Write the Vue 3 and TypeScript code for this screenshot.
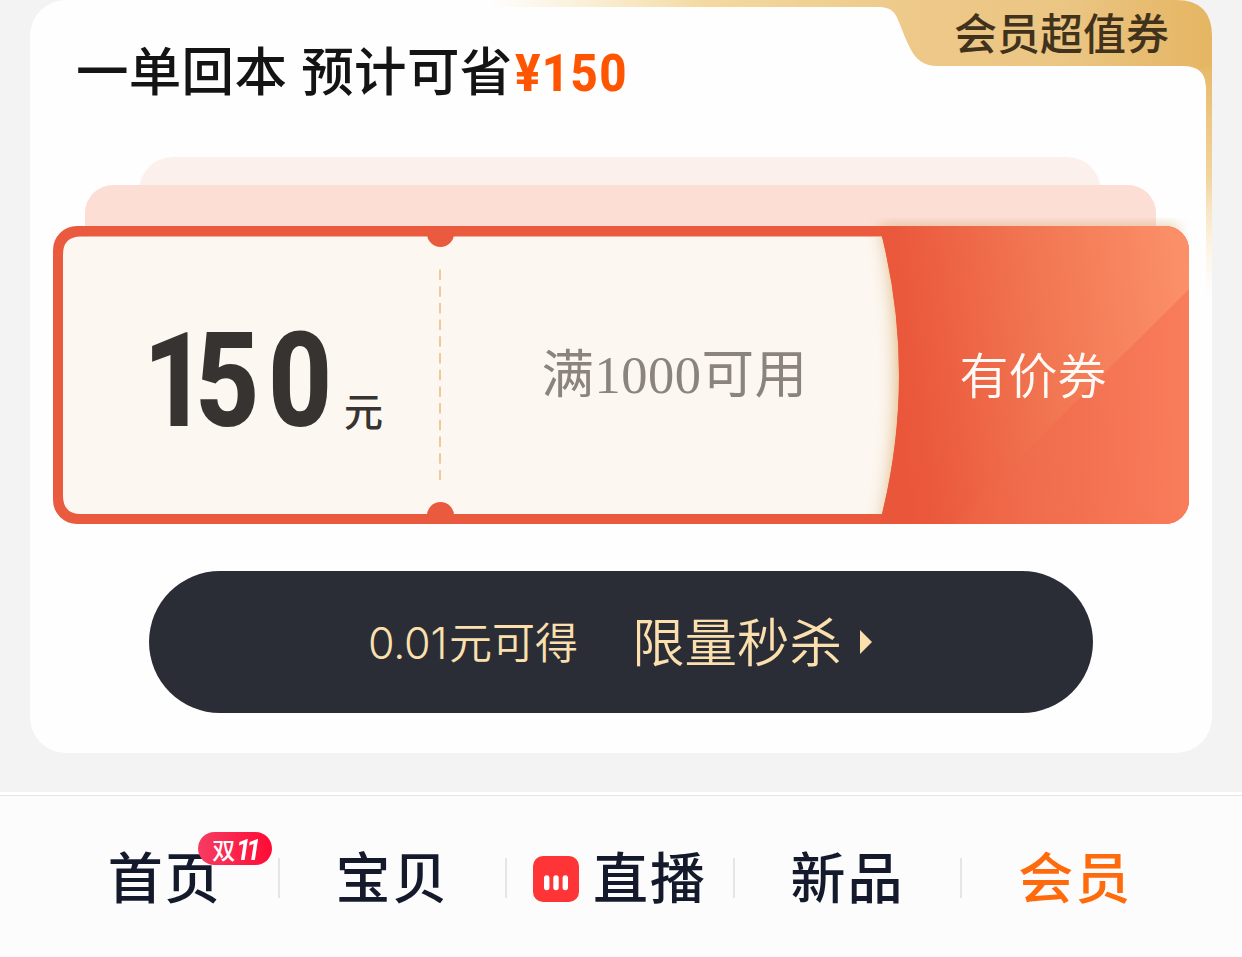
<template>
  <div class="page">
    <section class="card">
      <svg class="card-gold" viewBox="0 0 1182 300" aria-hidden="true">
        <defs>
          <linearGradient id="goldTop" x1="460" y1="0" x2="1182" y2="0" gradientUnits="userSpaceOnUse">
            <stop offset="0" stop-color="#f6dfa8" stop-opacity="0" />
            <stop offset="0.3" stop-color="#f3d9a0" />
            <stop offset="0.6" stop-color="#edc888" />
            <stop offset="0.8" stop-color="#eac583" />
            <stop offset="1" stop-color="#e5b562" />
          </linearGradient>
          <linearGradient id="goldSide" x1="0" y1="60" x2="0" y2="300" gradientUnits="userSpaceOnUse">
            <stop offset="0" stop-color="#e6b866" />
            <stop offset="0.5" stop-color="#f3d5a0" />
            <stop offset="1" stop-color="#fdf3dc" stop-opacity="0" />
          </linearGradient>
        </defs>
        <path
          d="M460 0H1146Q1182 0 1182 36V92H1176V88Q1176 66 1153 66H908C894 66 886 60 880 48C873 34 869 20 865 14C861 9 857 7 848 7H460Z"
          fill="url(#goldTop)"
        />
        <path d="M1176 86Q1176 74 1168 69L1182 66V300H1176Z" fill="url(#goldSide)" />
      </svg>

      <header class="card-header">
        <h1 class="headline">一单回本 预计可省<span class="saving">¥150</span></h1>
        <span class="ribbon">会员超值券</span>
      </header>

      <div class="stack">
        <div class="layer-far"></div>
        <div class="layer-near"></div>
        <div class="coupon">
          <svg class="coupon-art" viewBox="0 0 1136 298" aria-hidden="true">
            <defs>
              <linearGradient id="panel" x1="835" y1="125" x2="1136" y2="85" gradientUnits="userSpaceOnUse">
                <stop offset="0" stop-color="#ea563a" />
                <stop offset="0.1" stop-color="#eb5a3d" />
                <stop offset="0.5" stop-color="#f17551" />
                <stop offset="1" stop-color="#fb9068" />
              </linearGradient>
              <linearGradient id="fold" x1="900" y1="0" x2="1136" y2="0" gradientUnits="userSpaceOnUse">
                <stop offset="0" stop-color="#ee6647" stop-opacity="0.2" />
                <stop offset="0.5" stop-color="#f26c4e" stop-opacity="0.7" />
                <stop offset="1" stop-color="#f97c5b" />
              </linearGradient>
              <clipPath id="outer"><rect width="1136" height="298" rx="24" /></clipPath>
              <clipPath id="paper">
                <path d="M28 10.500H829Q863 149 829 288H28Q10 288 10 270V28.500Q10 10.500 28 10.500Z" />
              </clipPath>
              <filter id="soft" x="-20%" y="-20%" width="140%" height="140%">
                <feGaussianBlur stdDeviation="7" />
              </filter>
              <filter id="softer" x="-40%" y="-20%" width="180%" height="140%">
                <feGaussianBlur stdDeviation="9" />
              </filter>
            </defs>
            <rect x="828" y="0" width="296" height="40" fill="#d9a878" opacity="0.7" filter="url(#soft)" />
            <rect width="1136" height="298" rx="24" fill="#e95a3e" />
            <g clip-path="url(#paper)">
              <rect width="900" height="298" fill="#fcf7f1" />
              <path d="M827 -20Q863 149 827 318H900V-20Z" fill="#d9a863" opacity="0.9" filter="url(#softer)" />
            </g>
            <g clip-path="url(#outer)">
              <path d="M827 0L829 10.500Q863 149 829 288L827 298H1136V0Z" fill="url(#panel)" />
              <path d="M1136 63L900 298H1136Z" fill="url(#fold)" />
              <circle cx="387.500" cy="7.500" r="13.500" fill="#e95a3e" />
              <circle cx="387.500" cy="289.500" r="13.500" fill="#e95a3e" />
            </g>
            <path d="M387 43.500V254" stroke="#edcb98" stroke-width="2" stroke-dasharray="10.500 6.200" />
          </svg>
          <div class="amount">
            <span class="amount-value"><span class="amount-lead">1</span>50</span>
            <span class="amount-unit">元</span>
          </div>
          <div class="condition">满1000可用</div>
          <div class="kind">有价券</div>
        </div>
      </div>

      <button class="buy">
        <span class="buy-price"><span class="buy-number">0.01</span>元可得</span>
        <span class="buy-label">限量秒杀</span>
        <svg class="buy-arrow" viewBox="0 0 12 24" aria-hidden="true">
          <path d="M0 0L12 12L0 24Z" fill="#fbe0ae" />
        </svg>
      </button>
    </section>

    <nav class="tabs">
      <a v-for="tab in tabs" :key="tab.label" class="tab" :class="{ active: tab.active }">
        <svg v-if="tab.live" class="live-icon" viewBox="0 0 46 46" aria-hidden="true">
          <rect width="46" height="46" rx="10" fill="#ff3436" />
          <path d="M13.700 22V31.500M23 22V31.500M32.300 22V31.500" stroke="#fff" stroke-width="5.400" stroke-linecap="round" />
        </svg>
        <span class="tab-label">{{ tab.label }}</span>
        <span v-if="tab.badge" class="badge">{{ tab.badge }}<i class="badge-day">11</i></span>
      </a>
    </nav>
  </div>
</template>

<script setup lang="ts">
interface Tab {
  label: string
  badge?: string
  live?: boolean
  active?: boolean
}

const tabs: Tab[] = [
  { label: '首页', badge: '双' },
  { label: '宝贝' },
  { label: '直播', live: true },
  { label: '新品' },
  { label: '会员', active: true }
]
</script>

<style>
body {
  margin: 0;
  background: #f3f3f3;
}
</style>

<style scoped>
.page {
  display: flex;
  flex-direction: column;
  width: 1242px;
  height: 957px;
  overflow: hidden;
  background: #f3f3f3;
  font-family: "Noto Sans CJK SC", sans-serif;
}

.card {
  position: relative;
  display: flex;
  flex-direction: column;
  align-items: center;
  box-sizing: border-box;
  height: 753px;
  margin: 0 30px 39px;
  border-radius: 36px;
  background: #fefefe;
}

.card-gold {
  position: absolute;
  top: 0;
  left: 0;
  width: 1182px;
  height: 300px;
}

.card-header {
  position: relative;
  display: flex;
  justify-content: space-between;
  align-items: flex-start;
  box-sizing: border-box;
  width: 100%;
  height: 157px;
  padding: 0 43px 0 46px;
}

.headline {
  display: flex;
  align-items: center;
  margin: 30px 0 0;
  height: 76px;
  color: #141414;
  font-size: 52.500px;
  font-weight: 500;
  letter-spacing: 0.3px;
  word-spacing: 2px;
  white-space: nowrap;
}

.saving {
  margin: 10px 0 0 2px;
  color: #ff5500;
  font-family: Roboto, sans-serif;
  font-size: 52px;
  font-weight: 800;
  letter-spacing: 1.5px;
  transform: scaleX(0.91);
  transform-origin: left;
}

.ribbon {
  height: 62px;
  color: #41321c;
  font-size: 43px;
  font-weight: 500;
  line-height: 62px;
}

.stack {
  display: flex;
  flex-direction: column;
  align-items: center;
}

.layer-far {
  width: 962px;
  height: 40px;
  margin: 0 2px -12px 0;
  border-radius: 34px 34px 0 0;
  background: #fcf0ed;
}

.layer-near {
  width: 1071px;
  height: 41px;
  margin-right: 2px;
  border-radius: 28px 28px 0 0;
  background: #fcded4;
}

.coupon {
  position: relative;
  display: grid;
  grid-template-columns: 387px 459px 290px;
  width: 1136px;
  height: 298px;
}

.coupon-art {
  position: absolute;
  top: 0;
  left: 0;
  width: 1136px;
  height: 298px;
  overflow: visible;
}

.amount,
.condition,
.kind {
  position: relative;
  display: flex;
  align-items: center;
  white-space: nowrap;
}

.amount {
  align-items: baseline;
  padding: 80px 0 0 90px;
  color: #363330;
}

.amount-value {
  width: 201px;
  font-family: Roboto, sans-serif;
  font-size: 131px;
  font-weight: 800;
  letter-spacing: 10px;
  line-height: 150px;
  transform: scaleX(0.85);
  transform-origin: left;
}

.amount-lead {
  letter-spacing: -14px;
}

.amount-unit {
  font-size: 39px;
  font-weight: 500;
}

.condition {
  justify-content: center;
  padding: 0 0 10px 10px;
  color: #8b847e;
  font-family: "Liberation Serif", "Noto Sans CJK SC", serif;
  font-size: 52.500px;
  letter-spacing: 0.5px;
}

.kind {
  justify-content: center;
  padding: 0 22px 6px 0;
  color: #fffaf5;
  font-size: 49px;
  font-weight: 350;
}

.buy {
  display: flex;
  align-items: center;
  box-sizing: border-box;
  width: 944px;
  height: 142px;
  margin: 47px 0 0;
  padding: 0 0 0 219px;
  border: 0;
  border-radius: 71px;
  background: #2b2d36;
  color: #fbe0ae;
  font-family: inherit;
  font-weight: 350;
  white-space: nowrap;
}

.buy-price {
  width: 264px;
  padding-bottom: 4px;
  font-size: 43px;
  text-align: left;
}

.buy-number {
  display: inline-block;
  width: 81px;
  font-family: Inter, sans-serif;
  font-size: 43px;
  font-weight: 300;
  letter-spacing: -0.2px;
}

.buy-label {
  width: 228px;
  padding-bottom: 6px;
  font-size: 52.500px;
  text-align: left;
}

.buy-arrow {
  width: 12px;
  height: 24px;
}

.tabs {
  display: grid;
  grid-template-columns: repeat(5, 1fr);
  box-sizing: border-box;
  height: 165px;
  padding: 0 53px 0 51px;
  border-top: 3px solid #fff;
  background: linear-gradient(#e4e4e4, #e4e4e4) top / 100% 1px no-repeat #fcfcfc;
}

.tab {
  position: relative;
  display: flex;
  justify-content: center;
  align-items: center;
  color: #14192c;
  font-size: 55px;
  font-weight: 500;
  white-space: nowrap;
}

.tab + .tab::before {
  content: "";
  position: absolute;
  top: 63px;
  left: -1px;
  width: 2px;
  height: 40px;
  background: #e6e6e8;
}

.tab-label {
  padding-bottom: 4px;
  letter-spacing: 2px;
}

.active {
  color: #ff6a0d;
}

.live-icon {
  width: 46px;
  height: 46px;
  margin: 6px 14px 0 0;
}

.badge {
  position: absolute;
  top: 37px;
  left: 147px;
  display: flex;
  justify-content: center;
  align-items: center;
  width: 74px;
  height: 33px;
  border-radius: 17px;
  background: linear-gradient(90deg, #f63c62, #ff0b35);
  color: #fff;
  font-size: 23px;
  font-weight: 500;
  line-height: 28px;
}

.badge-day {
  margin: 2px 0 0 0;
  font-family: Roboto, sans-serif;
  font-size: 29px;
  font-weight: 700;
  letter-spacing: -5px;
  transform: scaleX(0.9);
}
</style>
